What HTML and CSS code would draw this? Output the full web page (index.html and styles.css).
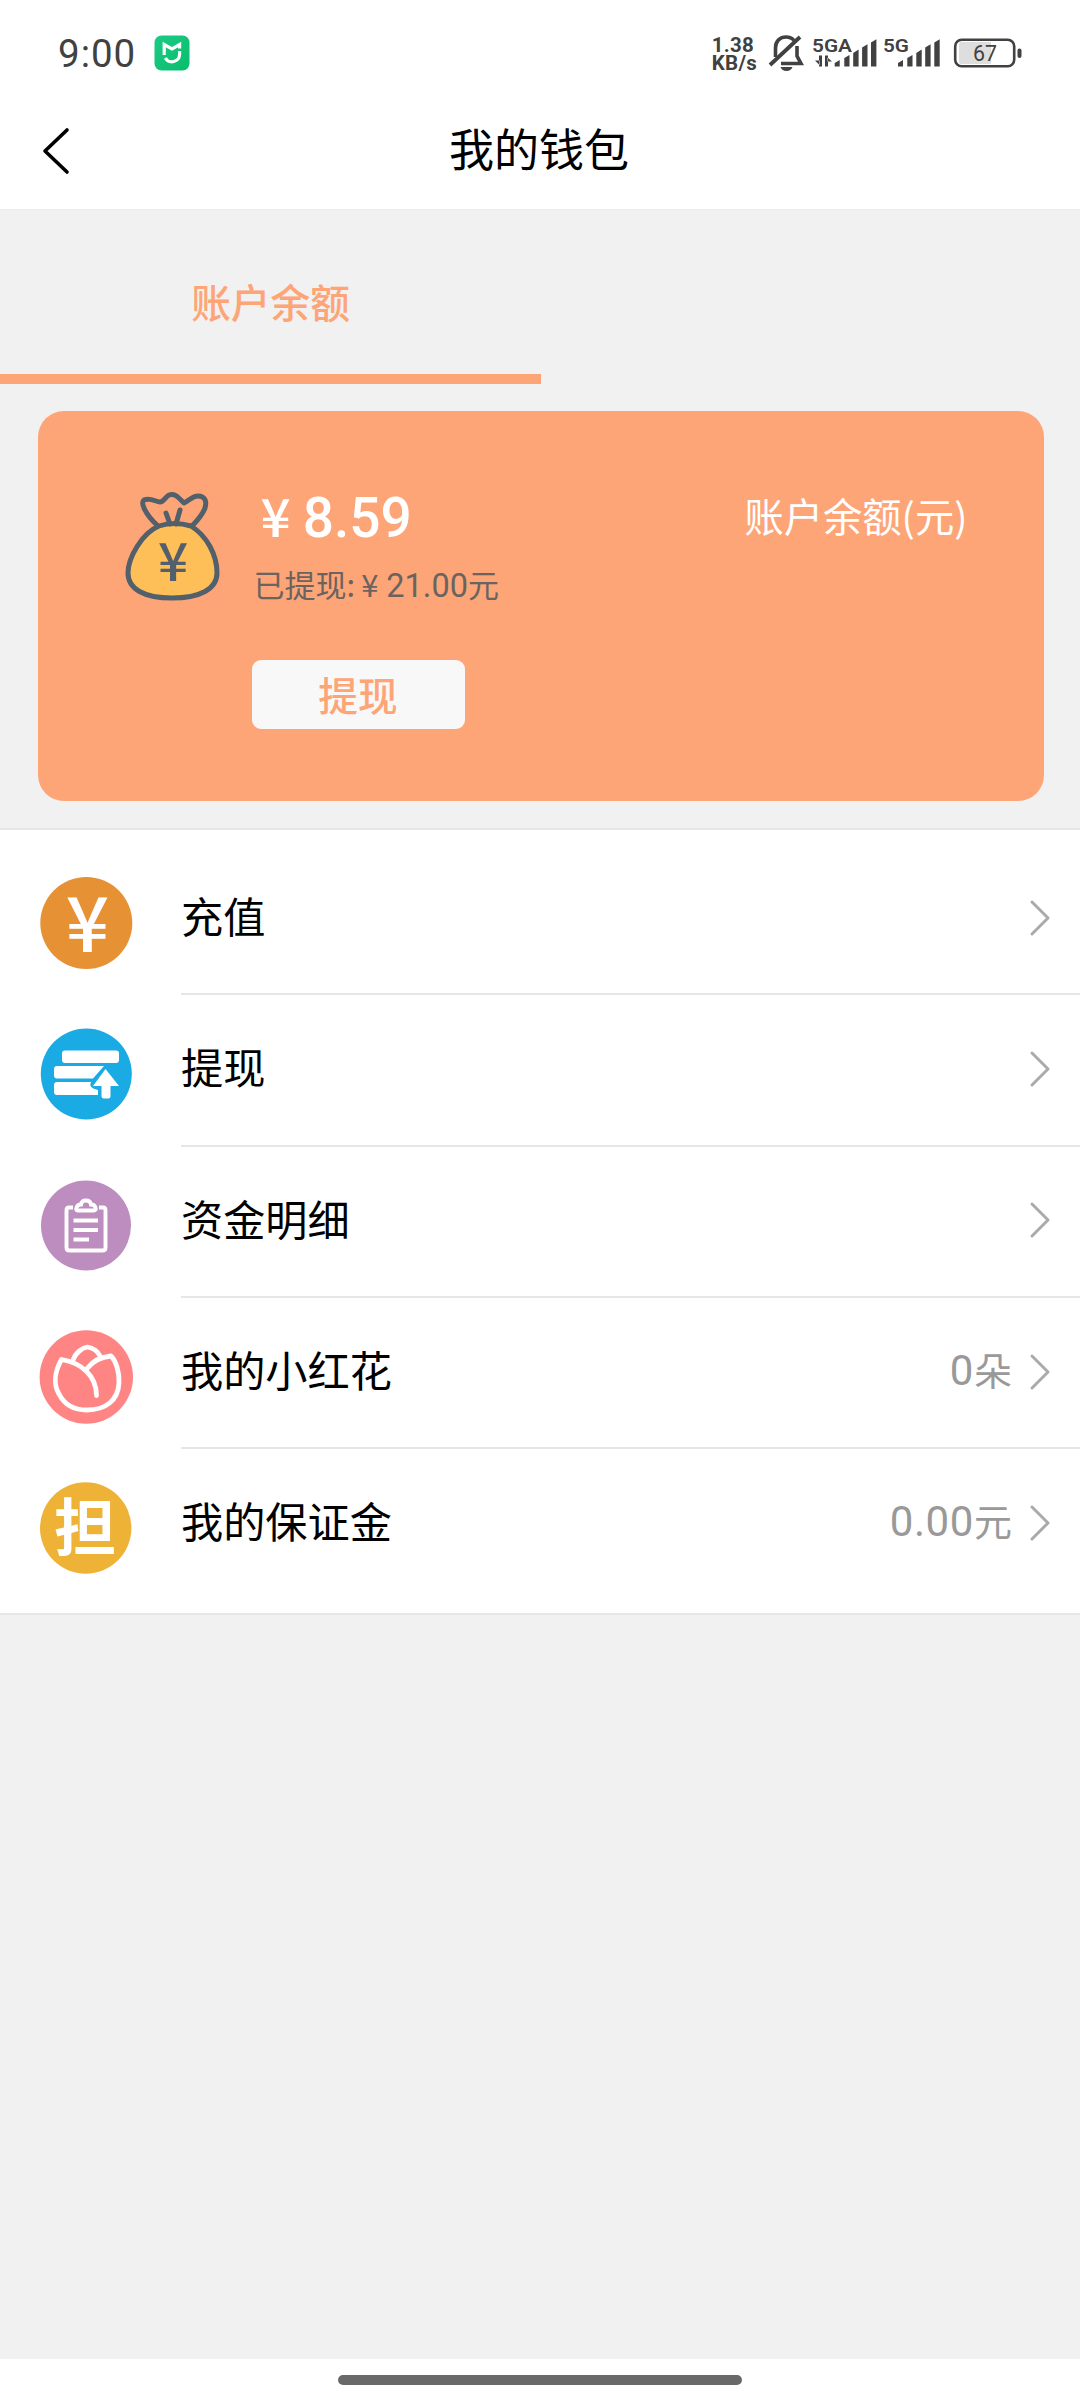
FILE: index.html
```html
<!DOCTYPE html>
<html lang="zh-CN">
<head>
<meta charset="utf-8">
<title>我的钱包</title>
<link rel="stylesheet" href="styles.css">
</head>
<body>
<div class="screen">
  <header class="top">
    <div class="status">
      <span class="clock">9:00</span>
      <svg class="app-badge" width="36" height="36" viewBox="0 0 36 36">
        <defs><linearGradient id="badge" x1="0" y1="0" x2="1" y2="1"><stop offset="0" stop-color="#1ccb86"/><stop offset="1" stop-color="#08bd6b"/></linearGradient></defs>
        <rect x=".5" y=".5" width="35" height="35" rx="7" fill="url(#badge)"/>
        <path d="M10.200 20V9.500L18 14L25.600 9.500V13.500M25.600 16V19.500A7.700 7.700 0 0 1 11.300 23" fill="none" stroke="#fff" stroke-width="3.200"/>
      </svg>
      <div class="speed"><span>1.38</span><span>KB/s</span></div>
      <svg class="bell" width="36" height="40" viewBox="0 0 36 40" fill="none" stroke="#414141" stroke-width="3.600">
        <path d="M6.500 24V15C6.500 8 11 4 17 4C20 4 23 5 25 7.500M28 13V23L32 30.500H12"/>
        <path d="M1 32L31 4" stroke-width="3.800"/>
        <path d="M11.500 34H23.500Q22 38 17.500 38T11.500 34Z" fill="#414141" stroke="none"/>
      </svg>
      <svg class="signals" width="132" height="36" viewBox="0 0 132 36" fill="#414141">
        <text x="0" y="16.500" font-size="19" font-weight="600" textLength="40" lengthAdjust="spacingAndGlyphs">5GA</text>
        <path d="M7 20.500V31.500H10V20.500ZM3 25.500L7.500 25.500V30ZM13 20.500V31.500H16V20.500ZM15.500 22.500L20 26.500H15.500Z"/>
        <path d="M22.700 31.500V28L27.700 25V31.500ZM32.300 31.500V23L37.500 20V31.500ZM41.200 31.500V18L46.600 14.500V31.500ZM50.100 31.500V12.500L55.500 9.300V31.500ZM59 31.500V7.500L64.400 4.300V31.500Z"/>
        <text x="71" y="16.500" font-size="19" font-weight="600" textLength="26" lengthAdjust="spacingAndGlyphs">5G</text>
        <path d="M86 31.500V28L91 25V31.500ZM95.300 31.500V23L100.500 20V31.500ZM104.300 31.500V18L109.700 14.500V31.500ZM113.200 31.500V12.500L118.600 9.300V31.500ZM122.300 31.500V7.500L127.700 4.300V31.500Z"/>
      </svg>
      <svg class="battery" width="70" height="32" viewBox="0 0 70 32">
        <path d="M7 5H37V27H7Q5 27 5 25V7Q5 5 7 5Z" fill="#dedede"/>
        <rect x="1.200" y="2.800" width="59" height="26.500" rx="6.500" fill="none" stroke="#414141" stroke-width="2.600"/>
        <rect x="63.500" y="11.500" width="4" height="9.500" rx="2" fill="#414141"/>
        <text x="19" y="24" font-size="22" font-weight="400" fill="#414141" textLength="24" lengthAdjust="spacingAndGlyphs">67</text>
      </svg>
    </div>
    <nav class="nav">
      <svg class="back" width="28" height="48" viewBox="0 0 28 48"><path d="M25 3L3 24L25 45" fill="none" stroke="#000" stroke-width="3.600" stroke-linecap="round" stroke-linejoin="round"/></svg>
      <h1>我的钱包</h1>
    </nav>
  </header>

  <div class="tabs"><div class="tab">账户余额</div></div>

  <section class="card">
    <svg class="bag" width="98" height="112" viewBox="0 0 98 112" fill="none" stroke="#52606b" stroke-width="5" stroke-linecap="round" stroke-linejoin="round">
      <path d="M32 34C21 24 15 12 19 9C25 6 31 11 35 11C39 11 40 6 44 4C50 2 53 6 59 12C64 10 67 5 73 5C80 5 82 10 80 17C77 25 70 32 66 36" />
      <path d="M34 35Q49 30 66 35C82 45 92 64 92 82C92 98 75 107 47 107C19 107 3 98 3 82C3 67 17 42 34 35Z" fill="#febe58"/>
      <path d="M41 22L45 33M55 19L51 33"/>
      <text class="bag-sign" x="48" y="90">¥</text>
    </svg>
    <div class="funds">
      <div class="amount"><span class="yen">¥</span>8.59</div>
      <div class="withdrawn">已提现:<span class="yen">¥</span><span class="num">21.00</span>元</div>
      <button class="withdraw">提现</button>
    </div>
    <div class="caption">账户余额(元)</div>
  </section>

  <ul class="menu">
    <li>
      <svg class="icon" viewBox="0 0 96 96"><circle cx="48.300" cy="48" r="46" fill="#e79135"/><text class="icon-yen" x="49.500" y="77">¥</text></svg>
      <div class="row"><span class="label">充值</span><svg class="arrow" viewBox="0 0 20 36"><path d="M2 2L18 18L2 34"/></svg></div>
    </li>
    <li>
      <svg class="icon" viewBox="0 0 96 96"><circle cx="48.300" cy="48" r="45.500" fill="#1aaae4"/>
        <g fill="#fff"><rect x="24" y="24.500" width="57" height="12.500" rx="3"/><path d="M19 40H66L55 52.500H19Q16 52.500 16 49.500V43Q16 40 19 40ZM19 56H53Q50 62 60 64V69H19Q16 69 16 66V59Q16 56 19 56Z"/><path d="M67.500 43L81 60H72.500V70Q72.500 72.500 70 72.500H66Q63.500 72.500 63.500 70V60H55Z"/></g></svg>
      <div class="row"><span class="label">提现</span><svg class="arrow" viewBox="0 0 20 36"><path d="M2 2L18 18L2 34"/></svg></div>
    </li>
    <li>
      <svg class="icon" viewBox="0 0 96 96"><circle cx="48" cy="47.500" r="45" fill="#bd8dbf"/>
        <g fill="none" stroke="#fff" stroke-width="3.900"><path d="M35 29.500H31Q28.500 29.500 28.500 32.500V69.500Q28.500 72.500 31.500 72.500H64.500Q67.500 72.500 67.500 69.500V32.500Q67.500 29.500 65 29.500H61"/><path d="M39.500 32.500Q37.500 32.500 38.500 29.500Q39.500 26.500 43 26.500Q43.500 22.500 48 22.500T53 26.500Q56.500 26.500 57.500 29.500Q58.500 32.500 56 32.500Z"/><path d="M35.500 42.500H60M35.500 52H60M35.500 61.500H51"/></g></svg>
      <div class="row"><span class="label">资金明细</span><svg class="arrow" viewBox="0 0 20 36"><path d="M2 2L18 18L2 34"/></svg></div>
    </li>
    <li>
      <svg class="icon" viewBox="0 0 96 96"><circle cx="48.300" cy="48" r="46.700" fill="#ff8585"/>
        <g fill="none" stroke="#fff" stroke-width="4.800" stroke-linecap="round" stroke-linejoin="round"><path d="M58.500 66.500C58.500 47 44 34 23.500 30.500C17 42 15 55 21 65C27 77 37 81 49 81C67 81 80 72 81 54C81.500 43 78 32 73 27C63 28 55 32 49.500 39"/><path d="M35 31C37 25 43 19 49.500 18C56 19 60 23 62 27"/></g></svg>
      <div class="row"><span class="label">我的小红花</span><span class="value">0<span class="unit">朵</span></span><svg class="arrow" viewBox="0 0 20 36"><path d="M2 2L18 18L2 34"/></svg></div>
    </li>
    <li>
      <svg class="icon" viewBox="0 0 96 96"><circle cx="47.700" cy="48" r="45.700" fill="#eeb236"/><text class="icon-char" x="47" y="71">担</text></svg>
      <div class="row"><span class="label">我的保证金</span><span class="value">0.00<span class="unit">元</span></span><svg class="arrow" viewBox="0 0 20 36"><path d="M2 2L18 18L2 34"/></svg></div>
    </li>
  </ul>

  <footer class="gesture"><div class="handle"></div></footer>
</div>
</body>
</html>
```
FILE: styles.css
```css
* { box-sizing: border-box; }
body {
  margin: 0;
  background: #f1f1f1;
  color: #000;
  font-family: "Noto Sans CJK SC", "Noto Sans", sans-serif;
}
.screen { width: 1080px; height: 2401px; display: flex; flex-direction: column; }
svg { display: block; flex: none; overflow: visible; }

.top { height: 210px; background: #fff; border-bottom: 1px solid #ececec; }
.status { height: 106px; padding: 0 56px 0 58px; display: flex; align-items: center; color: #414141; font-family: Roboto, sans-serif; }
.clock { margin-top: 1px; font-size: 38.500px; line-height: 40px; font-weight: 450; width: 97px; letter-spacing: 1px; }
.speed {
  margin-left: 522px; width: 58px; padding-top: 1px;
  display: flex; flex-direction: column;
  font-weight: 700; font-size: 20.500px; line-height: 18px; letter-spacing: .3px;
}
.bell { margin-right: 7px; }
.signals { margin-right: 10px; }
.nav { height: 103px; padding-left: 42px; display: flex; align-items: center; }
.back { margin-bottom: 13px; }
.nav h1 { flex: 1; margin: 0 72px 20px 0; font-size: 45px; line-height: 60px; font-weight: 400; text-align: center; }

.tabs { height: 174px; display: flex; }
.tab {
  width: 541px; padding-top: 61px;
  border-bottom: 10px solid #fea578;
  color: #fea578; font-size: 39.700px; line-height: 60px; font-weight: 500; text-align: center;
}

.card {
  width: 1006px; height: 390px; margin: 27px 0 0 37.500px; padding: 80px 76px 0 87px;
  display: flex; flex: none; align-items: flex-start;
  background: #fea578; border-radius: 26px;
}
.bag-sign { fill: #52606b; stroke: none; font-size: 53px; font-weight: 500; text-anchor: middle; }
.funds { flex: 1; margin-left: 29px; }
.amount { height: 58px; padding-left: 9px; color: #fff; font: 500 55px/54px Roboto, sans-serif; white-space: nowrap; }
.amount .yen { margin-right: 12px; font-family: "Noto Sans CJK SC", sans-serif; font-size: 53px; line-height: 1px; }
.withdrawn { height: 111px; padding-left: 2px; color: #6b635f; font-size: 31px; line-height: 70px; font-weight: 400; white-space: nowrap; }
.withdrawn .yen { margin: 0 8px 0 6px; }
.withdrawn .num { font-family: Roboto, sans-serif; font-size: 32.500px; }
.withdraw {
  display: block; width: 213px; height: 69px; padding: 0 0 2px; border: 0; border-radius: 9px;
  background: #f8f8f8; color: #fea578;
  font: 500 39.700px/65px "Noto Sans CJK SC", sans-serif;
}
.caption { color: #fff; font-size: 39.300px; line-height: 47px; white-space: nowrap; }

.menu {
  margin: 27px 0 0; padding: 14px 0 13px; list-style: none;
  background: #fff; border-top: 2px solid #e6e6e6; border-bottom: 2px solid #e6e6e6;
}
.menu li { height: 151.300px; padding-left: 38px; display: flex; align-items: center; }
.icon { width: 96px; height: 96px; margin: 7px 47px 0 0; }
.icon text { fill: #fff; text-anchor: middle; }
.icon-yen { font-size: 76px; font-weight: 500; }
.icon-char { font-size: 62px; font-weight: 700; }
.row { flex: 1; height: 100%; padding-right: 30px; display: flex; align-items: center; border-bottom: 2px solid #e6e6e6; }
.menu li:last-child .row { border-bottom-color: transparent; }
.label { flex: 1; margin-bottom: 7px; font-size: 42.200px; line-height: 60px; }
.value { margin: 0 18px 4px 0; color: #999; font: 400 42px/60px Roboto, sans-serif; letter-spacing: .6px; }
.unit { font-family: "Noto Sans CJK SC", sans-serif; font-size: 38px; line-height: 1px; letter-spacing: 0; }
.arrow { width: 20px; height: 36px; margin-bottom: 2px; fill: none; stroke: #aaa; stroke-width: 3; stroke-linecap: round; stroke-linejoin: round; }

.gesture { height: 42px; margin-top: auto; padding-top: 16px; background: #fff; }
.handle { width: 404px; height: 10px; margin: 0 auto; border-radius: 5px; background: #696969; }
```
